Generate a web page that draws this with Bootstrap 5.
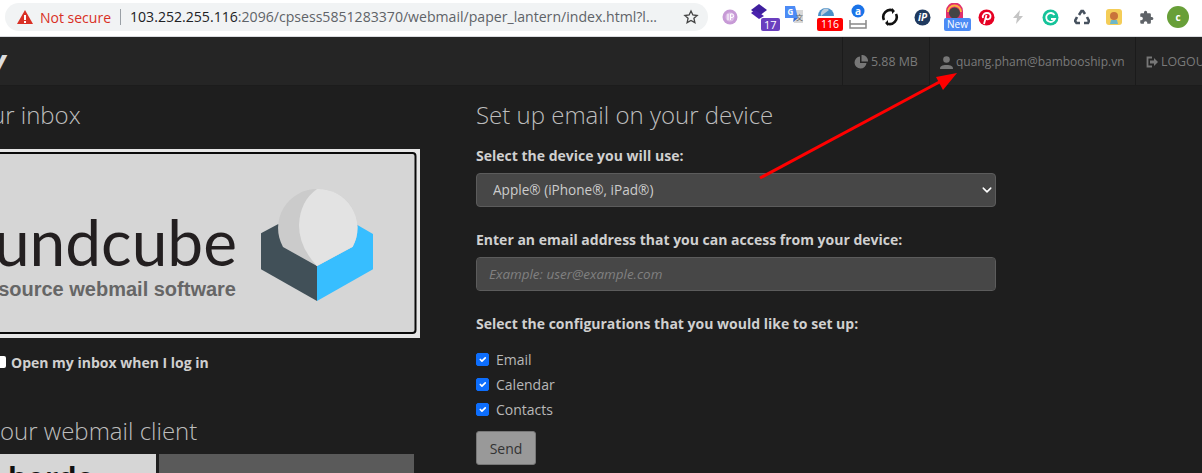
<!DOCTYPE html>
<html lang="en"><head><meta charset="utf-8"><title>Webmail</title>
<link href="https://cdn.jsdelivr.net/npm/bootstrap@5.3.0/dist/css/bootstrap.min.css" rel="stylesheet">
<style>
html,body{height:473px;overflow:hidden}
body{background:#1e1e1e;font-family:"Open Sans",sans-serif;color:#ccc;position:relative}
.chrome{height:37px;background:#fff;border-bottom:1px solid #dadce0;padding-left:5px}
.omni{width:703px;height:28px;background:#f1f3f4;border-radius:14px;margin-top:-2px;font-size:14.1px;white-space:nowrap;padding-left:11px;padding-right:9px;color:#5f6368}
.warn{color:#d93025;font-size:14px;margin-left:2px}
.omni-sep{width:1px;height:16px;background:#9aa0a6;margin:0 9px 0 9px}
.host{color:#202124}
.exts{margin-left:6px}
.ext{width:32px;height:28px;position:relative;display:flex;align-items:center;justify-content:center;margin-top:-2px}
.ext-badge{position:absolute;left:15px;bottom:0;font:11px/11px "Open Sans",sans-serif;color:#fff;padding:1px 3px;border-radius:2px;background:#6a3fbf;white-space:nowrap}
.ext-badge.red{left:7px;background:#f00;padding:1px 4px;font-size:10.500px}
.ext-badge.blue{left:6px;background:#4c8bf5;padding:1px 3px;font-size:10px}
.avatar{width:22px;height:22px;border-radius:50%;background:#689f38;color:#fff;font-size:10px;font-weight:700}
.topnav{height:49px;background:#252525;border-bottom:1px solid #1c1c1c;color:#7a7a7a;font-size:12.400px}
.brandcut{font:italic 700 32px/1 "Open Sans",sans-serif;color:#ddd;margin-left:-11px;width:24px}
.navcell{height:48px;border-left:1px solid #1b1b1b;gap:3px;white-space:nowrap;padding-top:2px}
.cell-a{width:87px;padding-left:11px}
.cell-b{width:206px;padding-left:10px;font-size:12px}
.cell-c{width:67px;padding-left:10px;overflow:hidden}
.pagewrap{padding-top:11px}
.leftcol{width:420px;flex:none;margin-right:56px;overflow:hidden}
.rightcol{width:520px;flex:none}
.sect-title{font-size:24px;font-weight:300;line-height:36px;color:#bdbdbd;margin:0;white-space:nowrap}
.title-cut{margin-left:-9px}
.logoimg{display:block;margin-top:16px}
.openrow{margin-top:14px;font-size:14px;font-weight:700;height:20px;white-space:nowrap;color:#d0d0d0}
.boxcut{width:12px;height:12px;background:#fff;border-radius:2px;margin-left:-6px;margin-right:5px}
.second-title{margin-top:41px}
.thumbs{margin-top:5px;gap:3px;height:30px;overflow:hidden}
.thumb-a{width:156px;background:#d6d6d6;color:#111;font-size:29px;font-weight:700;line-height:30px;padding-left:8px;padding-top:8px}
.thumb-b{width:255px;background:#5a5a5a}
.lab{font-size:14px;font-weight:700;color:#d0d0d0;line-height:20px;margin:0}
.dsel,.dinp{height:34px;background-color:#474747;border:1px solid #5c5c5c;color:#ccc;font-size:13.600px;border-radius:4px;padding:0 16px}
.dsel{--bs-form-select-bg-img:url("data:image/svg+xml,%3csvg xmlns='http://www.w3.org/2000/svg' viewBox='0 0 16 16'%3e%3cpath fill='none' stroke='%23fff' stroke-linecap='round' stroke-linejoin='round' stroke-width='2.400' d='m2 5 6 6 6-6'/%3e%3c/svg%3e");background-size:10px 10px;background-position:right 3px center}
.dinp{padding:0 12px;font-style:italic;font-size:13.450px}
.dinp::placeholder{color:#808080;opacity:1}
.dsel:focus,.dinp:focus{background-color:#474747;color:#ccc}
.ttl-gap{margin-top:13px;margin-bottom:7px}
.gap-lab{margin-top:23px;margin-bottom:7px}
.gap-lab2{margin-top:23px;margin-bottom:13px}
.chk{font-size:14px;line-height:25px;height:25px;min-height:0;margin:0;padding-left:20px;color:#b8b8b8}
.chk .form-check-input{width:13px;height:13px;margin-top:6px;margin-left:-20px;background-color:#0d6efd;border-color:#0d6efd;border-radius:2px}
.sendbtn{width:60px;height:34px;margin-top:9px;background:#999;border:1px solid #777;color:#333;font-size:14px;padding:0;border-radius:3px}
.arrow{position:absolute;left:0;top:0;pointer-events:none}
</style></head>
<body>
<div class="chrome d-flex align-items-center">
  <div class="omni d-flex align-items-center">
    <svg width="18" height="16" viewBox="0 0 18 16" class="me-1"><path d="M9 1 17 15H1Z" fill="#d93025"/><rect x="8" y="6" width="2" height="5" fill="#fff"/><rect x="8" y="12" width="2" height="2" fill="#fff"/></svg>
    <span class="warn">Not secure</span><span class="omni-sep"></span>
    <span><span class="host">103.252.255.116</span>:2096/cpsess5851283370/webmail/paper_lantern/index.html?l...</span>
    <svg class="ms-auto" width="16" height="16" viewBox="0 0 24 24"><path d="M12 3l2.800 6 6.400.7-4.800 4.300 1.400 6.400L12 17.100l-5.800 3.300 1.400-6.400L2.800 9.700 9.200 9z" fill="none" stroke="#444" stroke-width="2"/></svg>
  </div>
  <div class="exts d-flex">
    <div class="ext"><svg width="16" height="16"><circle cx="8" cy="8" r="7.500" fill="#c79ad6"/><circle cx="8" cy="8" r="4.500" fill="#dcbde6"/><path d="M6 5v6M8.500 11V5h1.500a1.500 1.500 0 0 1 0 3.500H8.500" stroke="#fff" fill="none"/></svg></div>
    <div class="ext"><svg width="18" height="18" style="margin:-8px 6px 0 0"><path d="M9 0l8 6-8 6-8-6z" fill="#3f1f9e"/><path d="M1 9l8 6 5-3-9-6z" fill="#4a22ad"/></svg><span class="ext-badge">17</span></div>
    <div class="ext"><svg width="20" height="20" viewBox="0 0 20 20" style="margin-top:-4px"><path d="M7 5h12v13H10z" fill="#d8d8d8"/><path d="M1 1h10l3 12H1z" fill="#4c8bf5"/><path d="M10 13l-1 4 5-4z" fill="#3367d6"/><text x="3.500" y="10" font-size="8" font-weight="700" fill="#fff" font-family="Open Sans">G</text><text x="12" y="15" font-size="7" fill="#666" font-family="Noto Sans CJK SC">文</text></svg></div>
    <div class="ext"><svg width="18" height="12" style="margin-top:-14px"><path d="M1 12a8 8 0 0 1 16 0z" fill="#4a90c8"/><path d="M4 12a5 6 0 0 1 8-6" fill="#bcd"/></svg><span class="ext-badge red">116</span></div>
    <div class="ext"><svg width="18" height="26" viewBox="0 0 18 26"><circle cx="9" cy="7" r="6.500" fill="#1a73e8"/><text x="9" y="10.500" font-size="10" text-anchor="middle" fill="#fff" font-family="Open Sans" font-weight="700">a</text><path d="M1 16v8h16v-8M1 20h16" fill="none" stroke="#888" stroke-width="1.500"/></svg></div>
    <div class="ext"><svg width="18" height="18" viewBox="0 0 18 18" fill="none" stroke="#111" stroke-width="2.600"><path d="M3 12A7 7 0 0 1 12 2.500"/><path d="M15 6a7 7 0 0 1-9 9.500"/><path d="M11 0l3 3-3 3zM7 12l-3 3 3 3z" fill="#111" stroke="none"/></svg></div>
    <div class="ext"><svg width="17" height="17"><circle cx="8.500" cy="8.500" r="8" fill="#1f3a5f"/><text x="8.500" y="12" font-size="10" font-style="italic" font-weight="700" text-anchor="middle" fill="#fff" font-family="Open Sans">iP</text></svg></div>
    <div class="ext"><svg width="17" height="16" viewBox="0 0 17 16" style="margin-top:-12px"><path d="M0 16V8a8 8 0 0 1 17 0v8z" fill="#e1306c"/><path d="M2 9a6.500 6.500 0 0 1 13 0" fill="none" stroke="#fbb040" stroke-width="2"/><circle cx="8.500" cy="10" r="5.500" fill="#444"/></svg><span class="ext-badge blue">New</span></div>
    <div class="ext"><svg width="17" height="17"><circle cx="8.500" cy="8.500" r="8" fill="#e60023"/><path d="M6 15l2.500-9M5 9C4 5.500 7 4 9 4c2.500 0 4 1.500 3.500 4-.5 2.500-3.500 3-4.500 1.500" fill="none" stroke="#fff" stroke-width="1.800"/></svg></div>
    <div class="ext"><svg width="10" height="14" viewBox="0 0 10 14"><path d="M7 0 0 8h4l-1 6 7-8H6z" fill="#c4c4c4"/></svg></div>
    <div class="ext"><svg width="17" height="17"><circle cx="8.500" cy="8.500" r="8" fill="#15c39a"/><path d="M12.500 6A4.500 4.500 0 1 0 13 10H9" fill="none" stroke="#fff" stroke-width="1.800"/></svg></div>
    <div class="ext"><svg width="16" height="16" viewBox="0 0 16 16" fill="none" stroke="#47525f" stroke-width="2.600"><path d="M5 6l2.500-4h1.500l2 3"/><path d="M13 8l2 4-1 2h-4"/><path d="M6 14H2.500L1 12l2-4"/></svg></div>
    <div class="ext"><svg width="16" height="16"><rect width="16" height="16" rx="3" fill="#f4cd58"/><circle cx="8" cy="7" r="4" fill="#c9733a"/><path d="M5 11h6l1 4H4z" fill="#6cb7c9"/></svg></div>
    <div class="ext"><svg width="15" height="15" viewBox="0 0 24 24"><path d="M20.500 11H19V7a2 2 0 0 0-2-2h-4V3.500a2.500 2.500 0 0 0-5 0V5H4a2 2 0 0 0-2 2v3.800h1.500a2.700 2.700 0 0 1 0 5.400H2V20a2 2 0 0 0 2 2h3.800v-1.500a2.700 2.700 0 0 1 5.400 0V22H17a2 2 0 0 0 2-2v-4h1.500a2.500 2.500 0 0 0 0-5z" fill="#5f6368"/></svg></div>
    <div class="ext"><span class="avatar d-flex align-items-center justify-content-center">c</span></div>
  </div>
</div>
<div class="topnav d-flex align-items-center">
  <div class="brandcut">y</div>
  <div class="ms-auto d-flex">
    <div class="navcell cell-a d-flex align-items-center"><svg width="14" height="14" viewBox="0 0 14 14"><path d="M6 1.500A6 6 0 1 0 12.500 8H6z" fill="#777"/><path d="M7.500 0A6 6 0 0 1 14 6.500H7.500z" fill="#777"/></svg><span>5.88 MB</span></div>
    <div class="navcell cell-b d-flex align-items-center"><svg width="13" height="13" viewBox="0 0 13 13"><circle cx="6.500" cy="3.500" r="3.300" fill="#777"/><path d="M0 13c0-3 2-4 6.500-4S13 10 13 13z" fill="#777"/></svg><span>quang.pham@bambooship.vn</span></div>
    <div class="navcell cell-c d-flex align-items-center"><svg width="12" height="12" viewBox="0 0 12 12" class="flex-shrink-0"><path d="M6 1.500H1.500v9H6" fill="none" stroke="#777" stroke-width="1.800"/><path d="M4 4.500h4V2l4 4-4 4V7.500H4z" fill="#777"/></svg><span>LOGOUT</span></div>
  </div>
</div>
<div class="pagewrap d-flex">
  <div class="leftcol">
    <h2 class="sect-title title-cut">ur inbox</h2>
    <svg class="logoimg" width="420" height="189" viewBox="0 0 420 189">
      <rect width="420" height="189" fill="#e6e6e6"/>
      <rect x="-10" y="4" width="425.500" height="180" rx="3" fill="#d6d6d6" stroke="#0a0a0a" stroke-width="2"/>
      <text x="237" y="117" text-anchor="end" font-family="Lato" font-size="64" font-weight="400" fill="#231f20">undcube</text>
      <text x="236" y="147" text-anchor="end" font-family="Liberation Sans" font-size="20" font-weight="700" fill="#666">source webmail software</text>
      <path d="M261 84.300 278.300 75 317 117V152L261 120.300Z" fill="#415058"/>
      <path d="M317 117 352.700 97.700 355.700 75 373 85V120.300L317 152Z" fill="#37beff"/>
      <path d="M317 40A39 39 0 0 0 283 98L317 117 352.700 97.700A39 39 0 0 0 317 40Z" fill="#cbcbcb"/>
      <path d="M317 40A39 39 0 0 1 352.700 97.700L317 117Q299 98 299 76 300 52 317 40Z" fill="#e3e3e3"/>
    </svg>
    <div class="openrow d-flex align-items-center"><span class="boxcut"></span><span>Open my inbox when I log in</span></div>
    <h2 class="sect-title second-title">our webmail client</h2>
    <div class="thumbs d-flex">
      <div class="thumb-a">horde</div>
      <div class="thumb-b"></div>
    </div>
  </div>
  <div class="rightcol">
    <h2 class="sect-title">Set up email on your device</h2>
    <p class="lab ttl-gap">Select the device you will use:</p>
    <select class="form-select dsel" aria-label="Device"><option>Apple® (iPhone®, iPad®)</option></select>
    <p class="lab gap-lab">Enter an email address that you can access from your device:</p>
    <input class="form-control dinp" placeholder="Example: user@example.com">
    <p class="lab gap-lab2">Select the configurations that you would like to set up:</p>
    <div class="form-check chk"><input class="form-check-input" type="checkbox" checked id="c1"><label for="c1">Email</label></div>
    <div class="form-check chk"><input class="form-check-input" type="checkbox" checked id="c2"><label for="c2">Calendar</label></div>
    <div class="form-check chk"><input class="form-check-input" type="checkbox" checked id="c3"><label for="c3">Contacts</label></div>
    <button class="btn sendbtn" type="button">Send</button>
  </div>
</div>
<svg class="arrow" width="1202" height="473" viewBox="0 0 1202 473"><path d="M760 178 945 79" stroke="#f00" stroke-width="3" fill="none"/><path d="M957 73 936 77 943 90Z" fill="#f00"/></svg>
<script src="https://cdn.jsdelivr.net/npm/bootstrap@5.3.0/dist/js/bootstrap.bundle.min.js"></script>
</body></html>
